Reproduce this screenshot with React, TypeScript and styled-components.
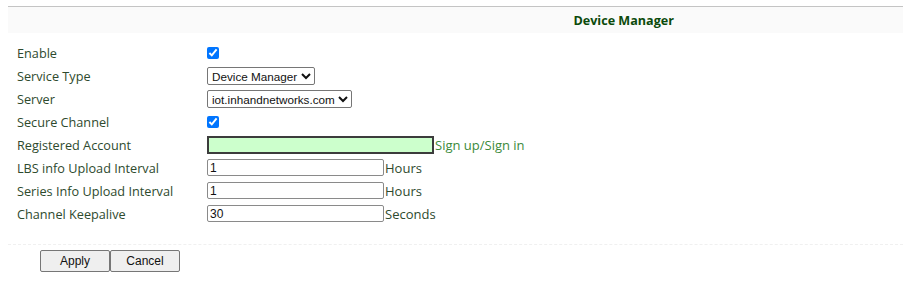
import React from 'react';
import styled, { createGlobalStyle } from 'styled-components';

const GlobalStyle = createGlobalStyle`
  body {
    margin: 0;
    padding: 6px 7px 0 8px;
    background: #fff;
    font-family: "Open Sans", "Segoe UI", sans-serif;
  }
`;

const Panel = styled.div`
  border-top: 1px solid #c4c4c4;
`;

const Header = styled.div`
  height: 26px;
  background: #fafafa;
  display: flex;
  align-items: center;
  justify-content: flex-end;
  padding-right: 229px;
  font-size: 12.6px;
  font-weight: 700;
  color: #0b4a0b;
`;

const Form = styled.div`
  padding: 9px 0 19px 9px;
  display: grid;
  grid-template-columns: 190px 1fr;
  grid-auto-rows: 22.9px;
  align-items: center;
`;

const Label = styled.div`
  font-size: 12.7px;
  color: #2e4a2e;
`;

const Field = styled.div`
  display: flex;
  align-items: center;
  font-size: 12.7px;
  color: #2e4a2e;
`;

const Check = styled.input.attrs({ type: 'checkbox' })`
  margin: 0;
  width: 12px;
  height: 12px;
  accent-color: #0075ff;
`;

const Select = styled.select`
  font-family: "Liberation Sans", Arial, sans-serif;
  font-size: 11.7px;
  height: 18px;
  padding: 0;
  border: 1px solid #767676;
  border-radius: 2px;
  background: #fff;
  color: #111;
`;

const Text = styled.input<{ $wide?: boolean; $hl?: boolean }>`
  box-sizing: border-box;
  width: ${p => (p.$wide ? '227px' : '177px')};
  height: ${p => (p.$hl ? '18px' : '17px')};
  margin: 0;
  padding: 0 2px;
  font-family: "Liberation Sans", Arial, sans-serif;
  font-size: 12px;
  color: #111;
  background: ${p => (p.$hl ? '#ccffcc' : '#fff')};
  border: ${p => (p.$hl ? '2px solid #3c3c3c' : '1px solid #8a8a8a')};
  border-radius: ${p => (p.$hl ? '0' : '2px')};
  outline: none;
`;

const Unit = styled.span<{ $link?: boolean }>`
  margin-left: 1px;
  color: ${p => (p.$link ? '#3b8a3b' : '#2e4a2e')};
  font-size: 13px;
`;

const Divider = styled.div`
  border-top: 1px dashed #f0f0f0;
`;

const Buttons = styled.div`
  display: flex;
  padding: 5px 0 0 32px;
`;

const Button = styled.button`
  width: 70px;
  height: 22px;
  font-family: "Liberation Sans", Arial, sans-serif;
  font-size: 12px;
  color: #111;
  background: #efefef;
  border: 1px solid #767676;
  border-radius: 2px;
  padding: 0;
`;

export default function App() {
  return (
    <>
      <GlobalStyle />
      <Panel>
        <Header>Device Manager</Header>
        <Form>
          <Label>Enable</Label>
          <Field><Check defaultChecked /></Field>
          <Label>Service Type</Label>
          <Field>
            <Select defaultValue="dm">
              <option value="dm">Device Manager</option>
            </Select>
          </Field>
          <Label>Server</Label>
          <Field>
            <Select defaultValue="iot">
              <option value="iot">iot.inhandnetworks.com</option>
            </Select>
          </Field>
          <Label>Secure Channel</Label>
          <Field><Check defaultChecked /></Field>
          <Label>Registered Account</Label>
          <Field>
            <Text $wide $hl defaultValue="" />
            <Unit $link>Sign up/Sign in</Unit>
          </Field>
          <Label>LBS info Upload Interval</Label>
          <Field>
            <Text defaultValue="1" />
            <Unit>Hours</Unit>
          </Field>
          <Label>Series Info Upload Interval</Label>
          <Field>
            <Text defaultValue="1" />
            <Unit>Hours</Unit>
          </Field>
          <Label>Channel Keepalive</Label>
          <Field>
            <Text defaultValue="30" />
            <Unit>Seconds</Unit>
          </Field>
        </Form>
        <Divider />
        <Buttons>
          <Button>Apply</Button>
          <Button>Cancel</Button>
        </Buttons>
      </Panel>
    </>
  );
}
